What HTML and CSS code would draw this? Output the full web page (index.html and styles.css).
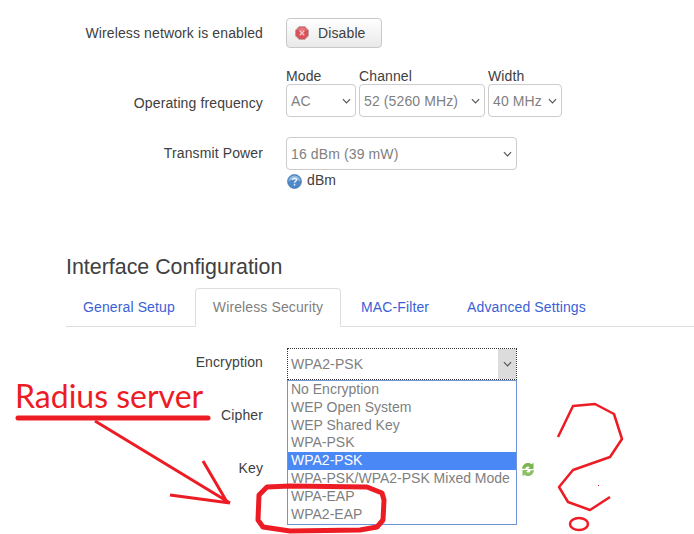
FILE: index.html
```html
<!DOCTYPE html>
<html lang="en">
<head>
<meta charset="utf-8">
<title>Wireless configuration</title>
<link rel="stylesheet" href="styles.css">
</head>
<body>
<main class="page">
  <section class="device-form">
    <div class="row row-enable">
      <div class="label">Wireless network is enabled</div>
      <div class="field">
        <button class="btn" type="button">
          <svg class="btn-icon" viewBox="0 0 14 14" aria-hidden="true">
            <path d="M4.200.5h5.600l3.700 3.700v5.600l-3.700 3.700H4.200L.5 9.800V4.200z" fill="#d9525a" stroke="#bfa3a3"/>
            <path d="M2 4l3-2.500h4L12 4c-3 1.500-7 1.500-10 0z" fill="#ee8f93" opacity=".6"/>
            <path d="M4.800 4.800l4.400 4.400M9.200 4.800l-4.400 4.400" stroke="#f3c4c6" stroke-width="1.500"/>
          </svg>
          Disable
        </button>
      </div>
    </div>
    <div class="row row-freq">
      <div class="label">Operating frequency</div>
      <div class="field freq-group">
        <div class="freq-col">
          <div class="freq-title">Mode</div>
          <div class="select sel-mode"><span>AC</span><svg class="chev" viewBox="0 0 10 6"><path d="M1 1l4 4 4-4"/></svg></div>
        </div>
        <div class="freq-col">
          <div class="freq-title">Channel</div>
          <div class="select sel-channel"><span>52 (5260 MHz)</span><svg class="chev" viewBox="0 0 10 6"><path d="M1 1l4 4 4-4"/></svg></div>
        </div>
        <div class="freq-col">
          <div class="freq-title">Width</div>
          <div class="select sel-width"><span>40 MHz</span><svg class="chev" viewBox="0 0 10 6"><path d="M1 1l4 4 4-4"/></svg></div>
        </div>
      </div>
    </div>
    <div class="row row-power">
      <div class="label label-top">Transmit Power</div>
      <div class="field">
        <div class="select sel-power"><span>16 dBm (39 mW)</span><svg class="chev" viewBox="0 0 10 6"><path d="M1 1l4 4 4-4"/></svg></div>
        <div class="hint">
          <svg class="hint-icon" viewBox="0 0 16 16" aria-hidden="true">
            <circle cx="8" cy="8" r="7.400" fill="#4f88c8" stroke="#3f74ad" stroke-width=".8"/>
            <path d="M1.500 8a6.500 6.500 0 0 1 13 0c-3-2-10-2-13 0z" fill="#a9cdf0" opacity=".7"/>
            <path d="M5.800 6.300c.2-1.200 1.100-1.900 2.200-1.900 1.300 0 2.200.8 2.200 1.800 0 1.600-2.200 1.500-2.200 3.200M8 10.500v1.700" fill="none" stroke="#e9f1fa" stroke-width="1.600"/>
          </svg>
          <span>dBm</span>
        </div>
      </div>
    </div>
  </section>

  <section class="iface">
    <h2 class="iface-title">Interface Configuration</h2>
    <nav class="tabs">
      <a class="tab tab-first">General Setup</a>
      <a class="tab tab-active">Wireless Security</a>
      <a class="tab">MAC-Filter</a>
      <a class="tab">Advanced Settings</a>
    </nav>
    <div class="sec-form">
      <div class="row row-enc">
        <div class="label">Encryption</div>
        <div class="field enc-field">
          <div class="enc-select">
            <span>WPA2-PSK</span>
            <div class="enc-arrow"><svg class="chev" viewBox="0 0 10 6"><path d="M1 1l4 4 4-4"/></svg></div>
          </div>
          <ul class="dropdown">
            <li>No Encryption</li>
            <li>WEP Open System</li>
            <li>WEP Shared Key</li>
            <li>WPA-PSK</li>
            <li class="selected">WPA2-PSK</li>
            <li>WPA-PSK/WPA2-PSK Mixed Mode</li>
            <li>WPA-EAP</li>
            <li>WPA2-EAP</li>
          </ul>
          <svg class="refresh" viewBox="0 0 14 15" aria-hidden="true">
            <path d="M1 6.800C1.500 2.800 4.300 1 7 1c1.500 0 2.700.5 3.500 1.300L12.500.8v6.200H7l1.800-1.800C8.400 4.700 7.800 4.400 7 4.400c-1.500 0-2.400 1-2.800 2.400z" fill="#7cb550"/>
            <path d="M13 8.200C12.500 12.200 9.700 14 7 14c-1.500 0-2.700-.5-3.500-1.300L1.500 14.200V8H7L5.200 9.800c.4.500 1 .8 1.800.8 1.500 0 2.400-1 2.800-2.400z" fill="#8cc063"/>
          </svg>
        </div>
      </div>
      <div class="row row-cipher"><div class="label">Cipher</div></div>
      <div class="row row-key"><div class="label">Key</div></div>
    </div>
  </section>
</main>

<div class="radius-note">Radius server</div>
<svg class="scribble" viewBox="0 0 694 534" aria-hidden="true">
  <path class="thick" d="M18 418H208"/>
  <path class="thin" d="M95 421L230 503M203 461L227 502M170 495L230 503"/>
  <path class="loop" d="M367 487L290 486L267 487L259 495L258 520L263 527L290 531L360 530L377 527L383 520L384 500L382 493Z"/>
  <path class="pen" d="M558 437L573 406L595 404L614 414L622 439L610 457L573 470L559 487L568 502L590 510L610 497"/>
  <ellipse class="pen" cx="579" cy="524" rx="9" ry="6"/>
  <rect class="dot" x="598" y="485" width="1" height="1"/>
</svg>
</body>
</html>
```

FILE: styles.css
```css
* {
  box-sizing: border-box;
}

html, body {
  margin: 0;
  padding: 0;
  background: #fff;
}

body {
  width: 694px;
  height: 534px;
  overflow: hidden;
  position: relative;
  font-family: "Liberation Sans", Arial, sans-serif;
  font-size: 14px;
  letter-spacing: .12px;
  color: #404040;
}

.page {
  padding-top: 18px;
}

.row {
  display: flex;
}

.label {
  width: 263px;
  text-align: right;
  flex: none;
  line-height: 20px;
}

.field {
  margin-left: 23px;
}

.row-enable {
  height: 30px;
  align-items: center;
}

.btn {
  display: flex;
  align-items: center;
  gap: 9px;
  width: 96px;
  height: 30px;
  padding: 0 0 0 8px;
  border: 1px solid #c8c8c8;
  border-radius: 4px;
  background: linear-gradient(#ffffff, #e9e9e9);
  font: inherit;
  letter-spacing: inherit;
  color: #404040;
}

.btn-icon {
  width: 14px;
  height: 14px;
  flex: none;
}

.row-freq {
  margin-top: 19px;
  height: 50px;
  align-items: flex-end;
}

.row-freq .label {
  padding-bottom: 4px;
}

.freq-group {
  display: flex;
  gap: 3px;
}

.freq-title {
  height: 17px;
  line-height: 19px;
}

.select {
  display: flex;
  align-items: center;
  justify-content: space-between;
  height: 33px;
  padding: 0 4px 0 4px;
  border: 1px solid #ccc;
  border-radius: 4px;
  background: #fff;
  color: #7f7f7f;
}

.sel-mode { width: 70px; }
.sel-channel { width: 126px; }
.sel-width { width: 74px; }
.sel-power { width: 231px; }

.chev {
  width: 9px;
  height: 6px;
  fill: none;
  stroke: #555;
  stroke-width: 1.300;
  flex: none;
}

.row-power {
  margin-top: 20px;
}

.label-top {
  line-height: 32px;
}

.hint {
  display: flex;
  align-items: center;
  gap: 5px;
  height: 20px;
  padding-left: 1px;
}

.hint-icon {
  width: 15px;
  height: 15px;
  margin-top: 2px;
}

.iface {
  margin-top: 65px;
  padding-left: 66px;
}

.iface-title {
  margin: 0;
  height: 33px;
  font-size: 21.400px;
  font-weight: 400;
  letter-spacing: 0;
  line-height: 24px;
  color: #404040;
}

.tabs {
  display: flex;
  height: 39px;
  border-bottom: 1px solid #ddd;
}

.tab {
  display: block;
  margin-right: 2px;
  padding: 8px 17px 0;
  border: 1px solid transparent;
  color: #3b5fd6;
  line-height: 20px;
  white-space: nowrap;
}

.tab-first {
  padding-left: 16px;
}

.tab-active {
  height: 39px;
  border-color: #ddd;
  border-bottom-color: #fff;
  border-radius: 4px 4px 0 0;
  color: #7f7f7f;
  background: #fff;
}

.sec-form {
  margin-left: -66px;
  padding-top: 21px;
}

.row-enc {
  height: 32px;
  align-items: center;
}

.row-enc .label {
  padding-bottom: 4px;
}

.enc-field {
  position: relative;
  margin-left: 24px;
}

.enc-select {
  display: flex;
  align-items: center;
  justify-content: space-between;
  width: 230px;
  height: 32px;
  padding-left: 3px;
  border: 1px dotted #333;
  color: #7f7f7f;
  background: #fff;
}

.enc-arrow {
  display: flex;
  align-items: center;
  justify-content: center;
  width: 18px;
  height: 100%;
  background: #dcdcdc;
}

.dropdown {
  position: absolute;
  left: 0;
  top: 32px;
  width: 230px;
  height: 145px;
  margin: 0;
  padding: 0;
  list-style: none;
  border: 1px solid #6f94d8;
  background: #fff;
  color: #7f7f7f;
  letter-spacing: 0;
}

.dropdown li {
  height: 17.800px;
  line-height: 17.800px;
  padding-left: 3px;
  white-space: nowrap;
}

.dropdown .selected {
  background: #4a88f5;
  color: #fff;
}

.refresh {
  position: absolute;
  left: 234px;
  top: 114px;
  width: 14px;
  height: 15px;
}

.row-cipher {
  margin-top: 25px;
}

.row-key {
  margin-top: 33px;
}

.radius-note {
  position: absolute;
  left: 15px;
  top: 376px;
  font-family: Lato, "Open Sans", sans-serif;
  font-size: 32px;
  letter-spacing: 0;
  line-height: 40px;
  color: #ed1c24;
}

.scribble {
  position: absolute;
  left: 0;
  top: 0;
  width: 694px;
  height: 534px;
  fill: none;
  stroke: #ed1c24;
  pointer-events: none;
}

.thick {
  stroke-width: 5;
  stroke-linecap: round;
}

.thin {
  stroke-width: 3;
}

.loop {
  stroke-width: 5;
  stroke-linejoin: round;
}

.pen {
  stroke-width: 2.500;
  stroke-linejoin: round;
}

.dot {
  fill: #ed1c24;
  stroke: none;
}
```
